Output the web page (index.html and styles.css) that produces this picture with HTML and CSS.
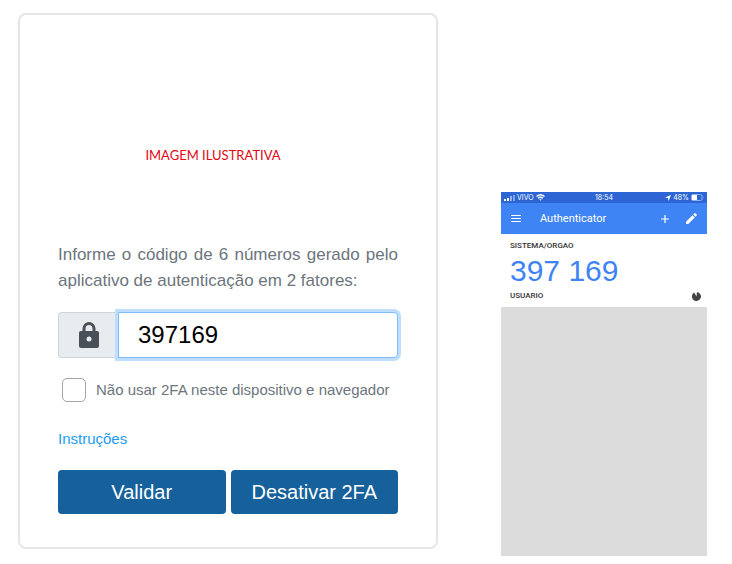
FILE: index.html
```html
<!DOCTYPE html>
<html lang="pt-BR">
<head>
  <meta charset="UTF-8" />
  <meta name="viewport" content="width=device-width, initial-scale=1.0" />
  <title>Autenticação em 2 fatores</title>
  <link rel="stylesheet" href="styles.css">
</head>
<body>
  <form class="card">
    <div class="banner">IMAGEM ILUSTRATIVA</div>

    <label class="intro" for="codigo">Informe o código de 6 números gerado pelo aplicativo de autenticação em 2 fatores:</label>
    <div class="input-group">
      <span class="addon">
        <svg width="20" height="26" viewBox="0 0 20 26">
          <path d="M5 10V6.500a5 5 0 0 1 10 0V10" fill="none" stroke="#495057" stroke-width="3" />
          <rect y="9" width="20" height="17" rx="2" fill="#495057" />
          <circle cx="10" cy="17" r="2.500" fill="#e9ecef" />
        </svg>
      </span>
      <input type="text" id="codigo" class="code" value="397169" />
    </div>

    <div class="check">
      <input type="checkbox" id="dispositivo" />
      <label for="dispositivo">Não usar 2FA neste dispositivo e navegador</label>
    </div>

    <a href="#" class="help">Instruções</a>

    <div class="buttons">
      <button type="button">Validar</button>
      <button type="button">Desativar 2FA</button>
    </div>
  </form>

  <section class="phone">
    <div class="status">
      <div class="carrier">
        <svg width="11" height="6" viewBox="0 0 11 6" fill="#fff">
          <rect y="4" width="2" height="2" />
          <rect x="3" y="3" width="2" height="3" />
          <rect x="6" y="1" width="2" height="5" opacity=".5" />
          <rect x="9" width="2" height="6" opacity=".4" />
        </svg>
        <span>VIVO</span>
        <svg width="9" height="7" viewBox="0 0 9 7" fill="none" stroke="#fff" stroke-width="1.300">
          <path d="M.5 2.500Q4.500-1 8.500 2.500M2 4.300Q4.500 2.200 7 4.300" />
          <path d="M3.200 5.300h2.600L4.500 6.800z" fill="#fff" stroke="none" />
        </svg>
      </div>
      <span>18:54</span>
      <div class="battery">
        <svg width="6" height="6" viewBox="0 0 6 6" fill="#fff">
          <path d="M6 0L3.500 6 3 3 0 2.500z" />
        </svg>
        <span>48%</span>
        <svg width="13" height="7" viewBox="0 0 13 7">
          <rect x=".5" y=".5" width="10.500" height="6" rx="1.500" fill="none" stroke="#8fb0ee" />
          <rect x="1" y="1" width="5" height="5" fill="#fff" />
          <path d="M12 2.500q1 1 0 2z" fill="#8fb0ee" />
        </svg>
      </div>
    </div>

    <div class="appbar">
      <svg width="10" height="7" viewBox="0 0 10 7" stroke="#fff">
        <path d="M0 .5h10M0 3.500h10M0 6.500h10" />
      </svg>
      <h1>Authenticator</h1>
      <svg width="8" height="8" viewBox="0 0 8 8" stroke="#fff" stroke-width="1.200">
        <path d="M4 0v8M0 4h8" />
      </svg>
      <svg width="11" height="11" viewBox="0 0 11 11" fill="#fff">
        <path d="M0 8.700L6.500 2.200l2.300 2.300L2.300 11H0zM7.200 1.500L8.400.3q.5-.5 1 0l1.300 1.300q.5.500 0 1L9.500 3.800z" />
      </svg>
    </div>

    <div class="account">
      <div class="system">SISTEMA/ORGAO</div>
      <div class="token">397 169</div>
      <div class="user">
        <span>USUARIO</span>
        <svg width="9" height="9" viewBox="0 0 9 9" fill="#444">
          <path d="M4.500 4.500V0A4.500 4.500 0 1 1 2.200.6z" />
          <path d="M4.500 4.500L4.300 0 5.200 0z" fill="#fff" />
        </svg>
      </div>
    </div>
  </section>
</body>
</html>
```
FILE: styles.css
```css
* {
  box-sizing: border-box;
}

body {
  margin: 0;
  padding: 13px 25px 8px 18px;
  min-height: 100vh;
  display: flex;
  justify-content: space-between;
  align-items: flex-start;
  background-color: #fff;
  font-family: "Liberation Sans", Arial, sans-serif;
}

/* login card */
.card {
  flex: 0 1 420px;
  min-width: 0;
  padding: 0 38px 33px;
  border: 2px solid #e6e6e6;
  border-radius: 8px;
}

.banner {
  padding: 130px 30px 77px 0;
  font-family: Lato, "Open Sans", sans-serif;
  font-size: 13px;
  line-height: 20px;
  text-align: center;
  color: #e30613;
}

.intro {
  display: block;
  font-size: 17px;
  line-height: 26px;
  text-align: justify;
  color: #6c757d;
  margin-bottom: 18px;
}

.input-group {
  display: flex;
  height: 46px;
}

.addon {
  width: 60px;
  display: flex;
  align-items: center;
  justify-content: center;
  background-color: #e9ecef;
  border: 1px solid #ced4da;
  border-right: none;
  border-radius: 4px 0 0 4px;
}

.code {
  flex: 1;
  min-width: 0;
  padding: 0 19px;
  font-family: inherit;
  font-size: 24px;
  color: #000;
  border: 1px solid #80bdff;
  border-radius: 0 4px 4px 0;
  box-shadow: 0 0 0 3px #bfdeff;
  outline: none;
}

.check {
  display: flex;
  align-items: center;
  gap: 10px;
  margin-top: 20px;
  padding-left: 4px;
  font-size: 15px;
  line-height: 24px;
  color: #6c757d;
}

.check input {
  appearance: none;
  width: 24px;
  height: 24px;
  margin: 0;
  background-color: #fff;
  border: 1px solid #a5a5a5;
  border-radius: 5px;
}

.help {
  display: block;
  margin: 25px 0 19px;
  font-size: 15px;
  line-height: 24px;
  color: #1b9cf0;
  text-decoration: none;
}

.buttons {
  display: flex;
  gap: 5px;
}

.buttons button {
  flex: 1;
  height: 44px;
  padding: 0;
  font-family: inherit;
  font-size: 20px;
  color: #fff;
  background-color: #16609b;
  border: none;
  border-radius: 4px;
  cursor: pointer;
}

/* phone */
.phone {
  flex: 0 1 206px;
  align-self: stretch;
  margin-top: 179px;
  background-color: #dcdcdc;
  font-family: Roboto, sans-serif;
}

.status {
  display: grid;
  grid-template-columns: 1fr auto 1fr;
  align-items: center;
  height: 11px;
  padding: 0 3px;
  font-family: Inter, sans-serif;
  font-size: 7px;
  color: #fff;
  background-color: #2d66d4;
}

.carrier,
.battery {
  display: flex;
  align-items: center;
  gap: 2px;
}

.battery {
  justify-content: flex-end;
}

.appbar {
  display: flex;
  align-items: center;
  height: 31px;
  padding: 0 10px;
  color: #fff;
  background-color: #3f84f4;
}

.appbar h1 {
  flex: 1;
  margin: 0 0 0 19px;
  font-size: 11px;
  font-weight: 400;
}

.appbar svg:last-child {
  margin-left: 17px;
}

.account {
  padding: 6px 6px 5px 9px;
  background-color: #fff;
}

.system,
.user {
  font-size: 8px;
  font-weight: 500;
  line-height: 12px;
  color: #333;
}

.token {
  font-family: "Liberation Sans", Arial, sans-serif;
  font-size: 30px;
  line-height: 38px;
  color: #3f84f4;
}

.user {
  display: flex;
  align-items: center;
  justify-content: space-between;
}
```
